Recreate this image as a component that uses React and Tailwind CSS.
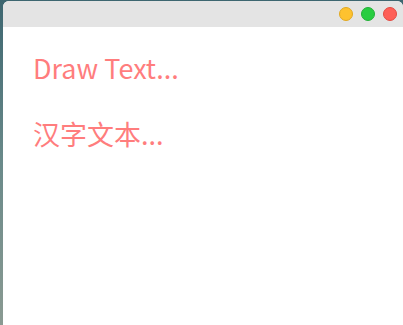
export default function App() {
  return (
    <div className="w-[403px] h-[325px] overflow-hidden bg-[linear-gradient(180deg,#3d6670,#6a8a8a_50%,#8a9a92)] pl-[3px] pt-[1px]">
      <div className="w-[400px] h-[324px] flex flex-col rounded-t-[6px] overflow-hidden bg-white">
        <div className="h-[26px] bg-[#e4e4e4] flex items-center justify-end gap-[8px] pr-[6px]">
          <div className="w-[14px] h-[14px] rounded-full bg-[#fec22f] border border-[#e0a820]" />
          <div className="w-[14px] h-[14px] rounded-full bg-[#28cd41] border border-[#22b038]" />
          <div className="w-[14px] h-[14px] rounded-full bg-[#fe5f57] border border-[#e24a42]" />
        </div>
        <div className="flex-1 flex flex-col pl-[30px] pt-[22px] gap-[28px] text-[27px] leading-[38px] text-[#ff7d7d] font-['Noto_Sans_CJK_SC',sans-serif]">
          <div>Draw Text...</div>
          <div>汉字文本...</div>
        </div>
      </div>
    </div>
  );
}
